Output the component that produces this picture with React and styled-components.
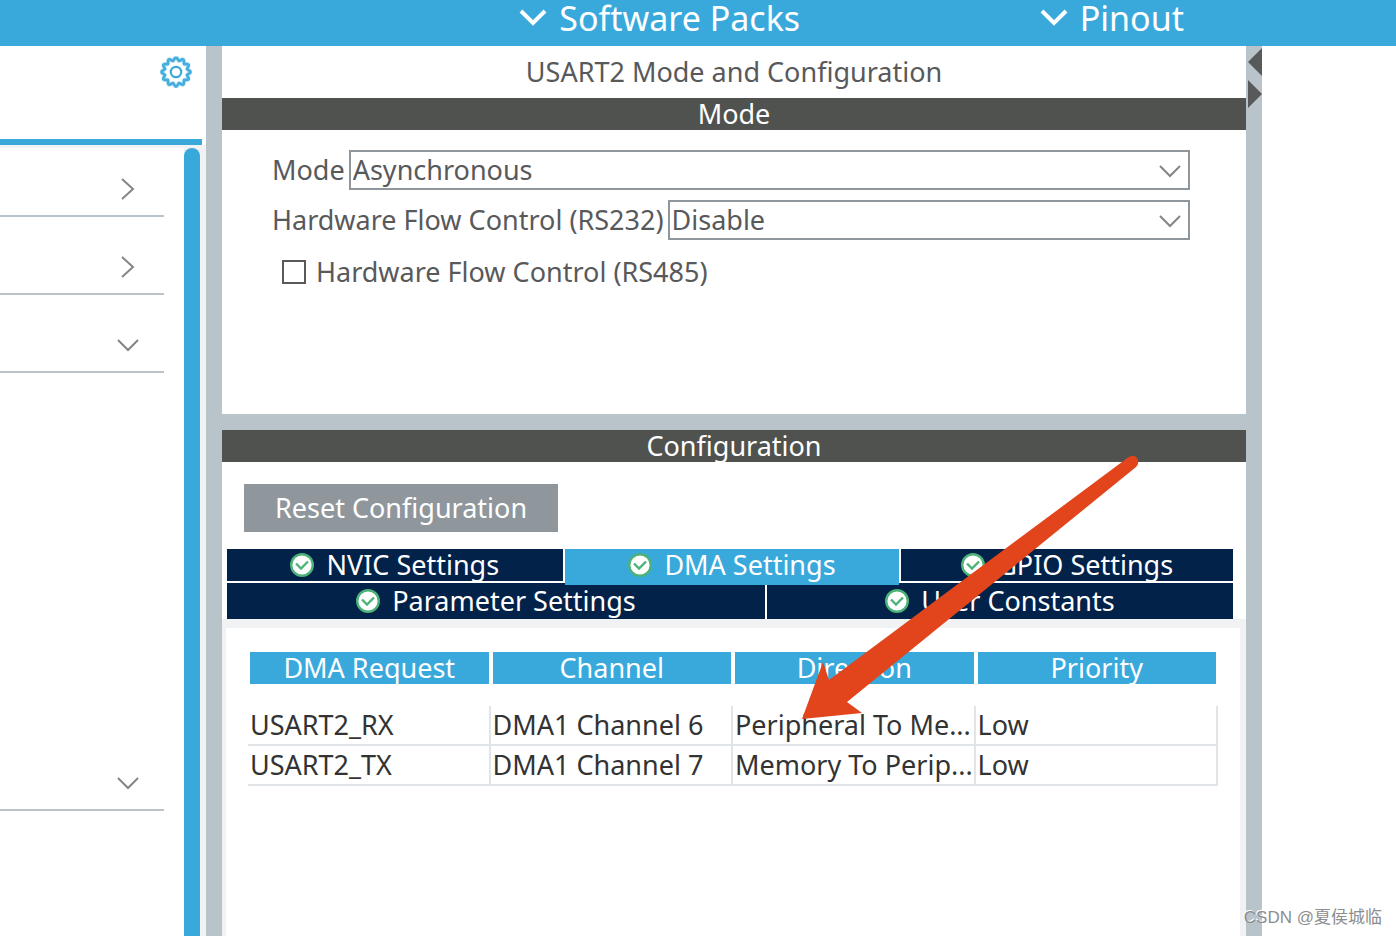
import React, { useState } from 'react'
import styled, { createGlobalStyle } from 'styled-components'

const categories = [
    { id: 'system', name: 'System Core', open: false },
    { id: 'timers', name: 'Timers', open: false },
    { id: 'connectivity', name: 'Connectivity', open: true },
    { id: 'middleware', name: 'Middleware', open: true },
]

const requests = [
    { request: 'USART2_RX', channel: 'DMA1 Channel 6', direction: 'Peripheral To Me...', priority: 'Low' },
    { request: 'USART2_TX', channel: 'DMA1 Channel 7', direction: 'Memory To Perip...', priority: 'Low' },
]

const tabRows = [
    { columns: '336fr 335fr 332fr', tabs: ['NVIC Settings', 'DMA Settings', 'GPIO Settings'] },
    { columns: '538fr 466fr', tabs: ['Parameter Settings', 'User Constants'] },
]

const ChevronDown = () => (
    <svg width="24" height="24" viewBox="0 0 24 24" fill="none" stroke="#858585" strokeWidth="2" aria-hidden="true">
        <path d="M2 8l10 10 10-10" />
    </svg>
)

const ChevronRight = () => (
    <svg width="24" height="24" viewBox="0 0 24 24" fill="none" stroke="#858585" strokeWidth="2" aria-hidden="true">
        <path d="M6 3l11 10L6 23" />
    </svg>
)

const MenuChevron = () => (
    <svg width="28" height="20" viewBox="0 0 28 20" fill="none" stroke="#fff" strokeWidth="4" aria-hidden="true">
        <path d="M2 3l12 12L26 3" />
    </svg>
)

const teeth = Array.from({ length: 97 }, (_, i) => {
    const angle = (i / 96) * Math.PI * 2
    const radius = 13 + 1.5 * Math.cos(angle * 12)
    return `${i ? 'L' : 'M'}${16 + radius * Math.sin(angle)} ${16 - radius * Math.cos(angle)}`
}).join('')

const Gear = () => (
    <svg width="32" height="32" viewBox="0 0 32 32" fill="none" stroke="#39a9dc" aria-hidden="true">
        <path d={teeth} strokeWidth="4" opacity="0.35" />
        <path d={teeth} strokeWidth="2.6" opacity="0.9" />
        <circle cx="16" cy="16" r="5.2" strokeWidth="2.2" />
    </svg>
)

const Check = () => (
    <svg width="24" height="24" viewBox="0 0 24 24" fill="none" stroke="#4bb377" aria-hidden="true">
        <circle cx="12" cy="12" r="10.8" fill="#fff" strokeWidth="2.4" />
        <path d="M6 10.500l5 5 7-7" strokeWidth="2.4" />
    </svg>
)

const SelectField = ({ id, label, options }) => (
    <Field>
        <label htmlFor={id}>{label}</label>
        <SelectBox>
            <Select id={id}>
                {options.map((option) => <option key={option}>{option}</option>)}
            </Select>
            <SelectArrow><ChevronDown /></SelectArrow>
        </SelectBox>
    </Field>
)

const Sidebar = () => (
    <SidebarWrapper>
        <SidebarHeader>
            <IconButton aria-label="Settings"><Gear /></IconButton>
        </SidebarHeader>
        <SidebarBody>
            <Categories>
                {categories.map(({ id, name, open }) => (
                    <React.Fragment key={id}>
                        <Category aria-label={name} aria-expanded={open}>
                            {open ? <ChevronDown /> : <ChevronRight />}
                        </Category>
                        {id === 'connectivity' && <CategoryContent />}
                    </React.Fragment>
                ))}
            </Categories>
            <ScrollThumb />
        </SidebarBody>
    </SidebarWrapper>
)

const DmaTable = () => (
    <Table>
        <thead>
            <tr>
                {['DMA Request', 'Channel', 'Direction', 'Priority'].map((title) => (
                    <Heading key={title}><HeadingLabel>{title}</HeadingLabel></Heading>
                ))}
            </tr>
        </thead>
        <tbody>
            {requests.map((item) => (
                <tr key={item.request}>
                    <Cell>{item.request}</Cell>
                    <Cell>{item.channel}</Cell>
                    <Cell>{item.direction}</Cell>
                    <Cell>{item.priority}</Cell>
                </tr>
            ))}
        </tbody>
    </Table>
)

export default function App() {

    const [activeTab, setActiveTab] = useState('DMA Settings')

    return (
        <Page>
            <GlobalStyle />
            <TopBar>
                <MenuButton><MenuChevron />Software Packs</MenuButton>
                <MenuButton><MenuChevron />Pinout</MenuButton>
            </TopBar>
            <Main>
                <Sidebar />
                <Divider />
                <Center>
                    <Title>USART2 Mode and Configuration</Title>
                    <SectionBar>Mode</SectionBar>
                    <ModeForm>
                        <SelectField id="mode" label="Mode" options={['Asynchronous', 'Synchronous', 'Disable']} />
                        <SelectField id="rs232" label="Hardware Flow Control (RS232)" options={['Disable', 'CTS Only', 'RTS Only']} />
                        <CheckField>
                            <Checkbox type="checkbox" />
                            Hardware Flow Control (RS485)
                        </CheckField>
                    </ModeForm>
                    <Splitter />
                    <Configuration>
                        <SectionBar>Configuration</SectionBar>
                        <ResetButton>Reset Configuration</ResetButton>
                        <Tabs role="tablist">
                            {tabRows.map(({ columns, tabs }) => (
                                <TabRow key={columns} $columns={columns}>
                                    {tabs.map((tab) => (
                                        <Tab
                                            key={tab}
                                            role="tab"
                                            aria-selected={activeTab === tab}
                                            $active={activeTab === tab}
                                            onClick={() => setActiveTab(tab)}
                                        >
                                            <Check />{tab}
                                        </Tab>
                                    ))}
                                </TabRow>
                            ))}
                        </Tabs>
                        <Panel><DmaTable /></Panel>
                        <Pointer width="350" height="276" viewBox="0 0 350 276" aria-hidden="true">
                            <path d="M6 269L27 212L33 230L332 7.500Q338 4 341 8Q344 13 340 17L51 252L66 263Z" fill="#e2441b" />
                        </Pointer>
                    </Configuration>
                </Center>
                <Divider>
                    <IconButton aria-label="Collapse left">
                        <svg width="16" height="32" viewBox="0 0 16 32"><path d="M16 2v28L2 16z" fill="#58595b" /></svg>
                    </IconButton>
                    <IconButton aria-label="Collapse right">
                        <svg width="16" height="32" viewBox="0 0 16 32"><path d="M2 2v28l14-14z" fill="#58595b" /></svg>
                    </IconButton>
                </Divider>
                <PinoutArea />
            </Main>
            <Watermark>CSDN @夏侯城临</Watermark>
        </Page>
    )
}

const GlobalStyle = createGlobalStyle`
    * {
        box-sizing: border-box;
    }
    body {
        margin: 0;
        color: #58595b;
        background: #fff;
        font: 27px/32px "Noto Sans", "Open Sans", sans-serif;
    }
    button, select {
        font: inherit;
        color: inherit;
        border: 0;
        border-radius: 0;
        padding: 0;
        background: none;
        cursor: pointer;
    }
    svg {
        display: block;
        flex-shrink: 0;
    }
`

const Page = styled.div`
    position: relative;
    display: flex;
    flex-direction: column;
    min-height: 100vh;
`

const TopBar = styled.header`
    display: grid;
    grid-template-columns: 520fr 356fr;
    height: 46px;
    padding: 0 0 10px 37.2%;
    background: #39a9dc;
`

const MenuButton = styled.button`
    display: flex;
    align-items: center;
    gap: 12px;
    font-size: 34px;
    color: #fff;
`

const Main = styled.main`
    display: flex;
    flex: 1;
`

const SidebarWrapper = styled.aside`
    display: flex;
    flex-direction: column;
    flex: 0 0 206px;
`

const SidebarHeader = styled.div`
    display: flex;
    justify-content: flex-end;
    align-items: flex-start;
    height: 99px;
    margin-right: 4px;
    padding: 10px 10px 0 0;
    border-bottom: 6px solid #39a9dc;
`

const IconButton = styled.button`
    display: block;
`

const SidebarBody = styled.div`
    display: flex;
    flex: 1;
    padding-right: 6px;
    border-top: 3px solid #f0f2f4;
    background: #f0f2f4;
`

const Categories = styled.nav`
    display: flex;
    flex-direction: column;
    gap: 22px;
    flex: 1;
    padding: 13px 20px 0 0;
    background: #fff;
`

const Category = styled.button`
    display: flex;
    align-items: center;
    justify-content: flex-end;
    height: 56px;
    padding-right: 24px;
    border-bottom: 2px solid #b8c4ca;
`

const CategoryContent = styled.div`
    min-height: 338px;
`

const ScrollThumb = styled.div`
    width: 16px;
    border-radius: 8px 8px 0 0;
    background: #39a9dc;
`

const Divider = styled.div`
    flex: 0 0 16px;
    background: #b8c4ca;
`

const Center = styled.section`
    display: flex;
    flex-direction: column;
    flex: 1;
    min-width: 0;
`

const Title = styled.h1`
    margin: 0;
    padding: 10px 0;
    font-size: 27px;
    font-weight: 400;
    text-align: center;
`

const SectionBar = styled.h2`
    margin: 0;
    font-size: 27px;
    font-weight: 400;
    text-align: center;
    color: #fff;
    background: #505250;
`

const ModeForm = styled.form`
    display: flex;
    flex-direction: column;
    gap: 10px;
    padding: 20px 56px 120px 50px;
`

const Field = styled.div`
    display: flex;
    align-items: center;
    gap: 4px;
    height: 40px;
`

const SelectBox = styled.div`
    position: relative;
    flex: 1;
`

const Select = styled.select`
    display: block;
    appearance: none;
    width: 100%;
    height: 40px;
    padding-left: 2px;
    line-height: 36px;
    border: 2px solid #8f979d;
    background: #fff;
`

const SelectArrow = styled.span`
    position: absolute;
    top: 8px;
    right: 8px;
    pointer-events: none;
`

const CheckField = styled.label`
    display: flex;
    align-items: center;
    gap: 10px;
    height: 44px;
    padding-left: 10px;
`

const Checkbox = styled.input`
    appearance: none;
    width: 24px;
    height: 24px;
    margin: 0;
    border: 2px solid #58595b;
    &:checked {
        background: #39a9dc;
    }
`

const Splitter = styled.div`
    height: 16px;
    background: #b8c4ca;
`

const Configuration = styled.section`
    position: relative;
    display: flex;
    flex-direction: column;
    flex: 1;
`

const ResetButton = styled.button`
    align-self: flex-start;
    margin: 22px 22px 17px;
    padding: 8px 31px;
    color: #fff;
    background: #8f979d;
`

const Tabs = styled.div`
    display: flex;
    flex-direction: column;
    gap: 2px;
    padding: 0 13px 0 5px;
`

const TabRow = styled.div`
    display: grid;
    grid-template-columns: ${({ $columns }) => $columns};
    gap: 2px;
    height: 32px;
    &:last-child {
        height: 36px;
    }
`

const Tab = styled.button`
    display: flex;
    align-items: center;
    justify-content: center;
    gap: 12px;
    color: #fff;
    background: ${({ $active }) => $active ? '#39a9dc' : '#032249'};
    ${({ $active }) => $active && 'z-index: 1; margin-bottom: -4px; padding-bottom: 4px;'}
`

const Panel = styled.div`
    flex: 1;
    padding: 24px 22px;
    border: solid #f0f2f4;
    border-width: 9px 6px 0 4px;
`

const Table = styled.table`
    width: 100%;
    table-layout: fixed;
    border-collapse: separate;
    border-spacing: 0;
    color: #333;
`

const Heading = styled.th`
    padding: 0 2px 22px;
    font-weight: 400;
`

const HeadingLabel = styled.span`
    display: block;
    color: #fff;
    background: #39a9dc;
`

const Cell = styled.td`
    height: 40px;
    padding: 0 0 0 2px;
    border: solid #e1e5e9;
    border-width: 0 2px 2px 0;
    white-space: nowrap;
    overflow: hidden;
`

const Pointer = styled.svg`
    position: absolute;
    top: 20px;
    right: 100px;
    z-index: 2;
    pointer-events: none;
`

const PinoutArea = styled.section`
    flex: 0 0 134px;
`

const Watermark = styled.span`
    position: absolute;
    right: 14px;
    bottom: 6px;
    font: 17px/24px "Liberation Sans", "Noto Sans CJK SC", sans-serif;
    color: #8c8e90;
    text-shadow: -1px -1px 0 #fff;
`
